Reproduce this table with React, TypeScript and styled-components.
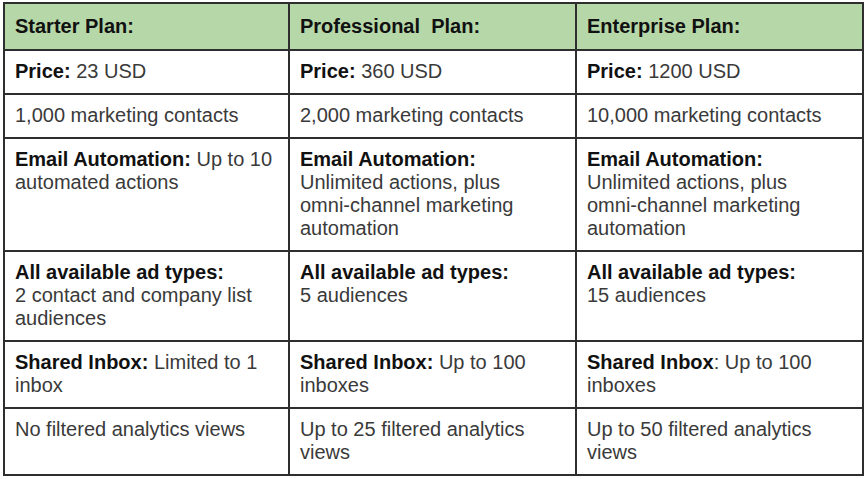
import styled, { createGlobalStyle } from "styled-components";

const GlobalStyle = createGlobalStyle`
  html, body {
    margin: 0;
    padding: 0;
    background: #fff;
  }
  body {
    font-family: "Liberation Sans", Arial, sans-serif;
  }
`;

const Page = styled.div`
  padding: 2px 0 0 3px;
`;

const Table = styled.div`
  display: grid;
  grid-template-columns: 283px 285px 285px;
  gap: 2px;
  width: max-content;
  background: #2e2e2e;
  border: 2px solid #2e2e2e;
`;

const Cell = styled.div`
  background: #fff;
  padding: 9px 6px 10px 10px;
  font-size: 20px;
  line-height: 23px;
  color: #3a3a3a;

  b {
    color: #111;
    font-weight: 700;
  }
`;

const NoWrap = styled.span`
  white-space: nowrap;
`;

const HeadCell = styled.div`
  background: #b6d7a8;
  padding: 11px 6px 11px 10px;
  font-size: 20px;
  line-height: 23px;
  font-weight: 700;
  color: #111;
  white-space: pre;
`;

type Plan = {
  title: string;
  cells: React.ReactNode[];
};

const plans: Plan[] = [
  {
    title: "Starter Plan:",
    cells: [
      <>
        <b>Price:</b> 23 USD
      </>,
      <>1,000 marketing contacts</>,
      <>
        <b>Email Automation:</b> Up to 10 automated actions
      </>,
      <>
        <b>All available ad types:</b>
        <br />2 contact and company list audiences
      </>,
      <>
        <b>Shared Inbox:</b> Limited to 1 inbox
      </>,
      <>No filtered analytics views</>,
    ],
  },
  {
    title: "Professional\u00a0 Plan:",
    cells: [
      <>
        <b>Price:</b> 360 USD
      </>,
      <>2,000 marketing contacts</>,
      <>
        <b>Email Automation:</b>
        <br />
        Unlimited actions, plus <NoWrap>omni-channel</NoWrap> marketing
        automation
      </>,
      <>
        <b>All available ad types:</b>
        <br />5 audiences
      </>,
      <>
        <b>Shared Inbox:</b> Up to 100 inboxes
      </>,
      <>Up to 25 filtered analytics views</>,
    ],
  },
  {
    title: "Enterprise Plan:",
    cells: [
      <>
        <b>Price:</b> 1200 USD
      </>,
      <>10,000 marketing contacts</>,
      <>
        <b>Email Automation:</b>
        <br />
        Unlimited actions, plus <NoWrap>omni-channel</NoWrap> marketing
        automation
      </>,
      <>
        <b>All available ad types:</b>
        <br />
        15 audiences
      </>,
      <>
        <b>Shared Inbox</b>: Up to 100 inboxes
      </>,
      <>Up to 50 filtered analytics views</>,
    ],
  },
];

const App = () => {
  const rows = plans[0].cells.length;
  return (
    <>
      <GlobalStyle />
      <Page>
        <Table>
          {plans.map((p) => (
            <HeadCell key={p.title}>{p.title}</HeadCell>
          ))}
          {Array.from({ length: rows }).map((_, r) =>
            plans.map((p, c) => <Cell key={`${r}-${c}`}>{p.cells[r]}</Cell>)
          )}
        </Table>
      </Page>
    </>
  );
};

export default App;
